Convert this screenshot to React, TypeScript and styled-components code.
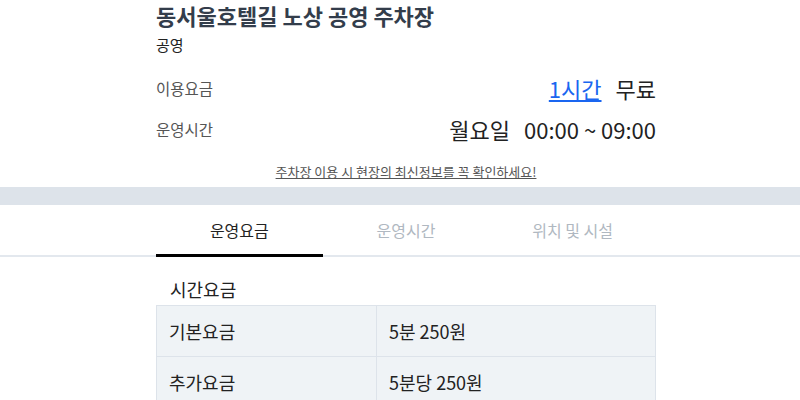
import React from "react";
import styled, { createGlobalStyle } from "styled-components";

const GlobalStyle = createGlobalStyle`
  body {
    margin: 0;
    background: #ffffff;
    font-family: "Noto Sans CJK KR", "Noto Sans", sans-serif;
    color: #222;
  }
`;

const tabs = ["운영요금", "운영시간", "위치 및 시설"];

const fees = [
  { label: "기본요금", value: "5분 250원" },
  { label: "추가요금", value: "5분당 250원" },
];

const App = () => {
  const [active, setActive] = React.useState(0);

  return (
    <>
      <GlobalStyle />
      <Column>
        <Title>동서울호텔길 노상 공영 주차장</Title>
        <Kind>공영</Kind>
        <InfoRow>
          <Label>이용요금</Label>
          <Value>
            <Link href="#">1시간</Link>
            <span>무료</span>
          </Value>
        </InfoRow>
        <InfoRow>
          <Label>운영시간</Label>
          <Value>
            <span>월요일</span>
            <span>00:00 ~ 09:00</span>
          </Value>
        </InfoRow>
        <Notice>주차장 이용 시 현장의 최신정보를 꼭 확인하세요!</Notice>
      </Column>

      <Band />

      <TabBar>
        <TabRow>
          {tabs.map((t, i) => (
            <Tab key={t} active={i === active} onClick={() => setActive(i)}>
              {t}
            </Tab>
          ))}
        </TabRow>
      </TabBar>

      <Column>
        <SectionTitle>시간요금</SectionTitle>
        <Table>
          {fees.map((f) => (
            <React.Fragment key={f.label}>
              <Cell>{f.label}</Cell>
              <Cell>{f.value}</Cell>
            </React.Fragment>
          ))}
        </Table>
      </Column>
    </>
  );
};

export default App;

const Column = styled.div`
  width: 500px;
  margin: 0 144px 0 156px;
  display: flex;
  flex-direction: column;
`;

const Title = styled.h1`
  margin: 0;
  padding-top: 1px;
  font-size: 22px;
  line-height: 29px;
  font-weight: 700;
  color: #333d4b;
`;

const Kind = styled.div`
  margin-top: 5px;
  font-size: 15px;
  line-height: 20px;
  color: #222;
`;

const InfoRow = styled.div`
  display: flex;
  align-items: center;
  justify-content: space-between;
  height: 30px;
  margin-top: 18px;
  & + & {
    margin-top: 11px;
  }
`;

const Label = styled.div`
  font-size: 15.5px;
  color: #555;
`;

const Value = styled.div`
  display: flex;
  gap: 14px;
  font-size: 22px;
  line-height: 30px;
  color: #222;
`;

const Link = styled.a`
  color: #1a66f0;
  text-decoration: underline;
`;

const Notice = styled.div`
  margin-top: 19px;
  text-align: center;
  font-size: 13px;
  line-height: 18px;
  color: #555;
  text-decoration: underline;
`;

const Band = styled.div`
  margin-top: 6px;
  height: 18px;
  background: #dde3ea;
`;

const TabBar = styled.div`
  box-shadow: inset 0 -2px 0 #e3e8ee;
`;

const TabRow = styled.div`
  width: 500px;
  margin: 0 144px 0 156px;
  display: grid;
  grid-template-columns: repeat(3, 1fr);
`;

const Tab = styled.div<{ active: boolean }>`
  height: 49px;
  display: flex;
  align-items: center;
  justify-content: center;
  font-size: 16px;
  cursor: pointer;
  color: ${(p) => (p.active ? "#222" : "#b0b8c1")};
  border-bottom: 3px solid ${(p) => (p.active ? "#000" : "transparent")};
`;

const SectionTitle = styled.div`
  margin: 20px 0 4px 14px;
  font-size: 18px;
  line-height: 24px;
  color: #222;
`;

const Table = styled.div`
  display: grid;
  grid-template-columns: 220px 1fr;
  border-top: 1px solid #dde3ea;
  border-left: 1px solid #dde3ea;
  background: #eff3f6;
`;

const Cell = styled.div`
  height: 50px;
  display: flex;
  align-items: center;
  padding-left: 12px;
  font-size: 18px;
  color: #222;
  border-right: 1px solid #dde3ea;
  border-bottom: 1px solid #dde3ea;
`;
